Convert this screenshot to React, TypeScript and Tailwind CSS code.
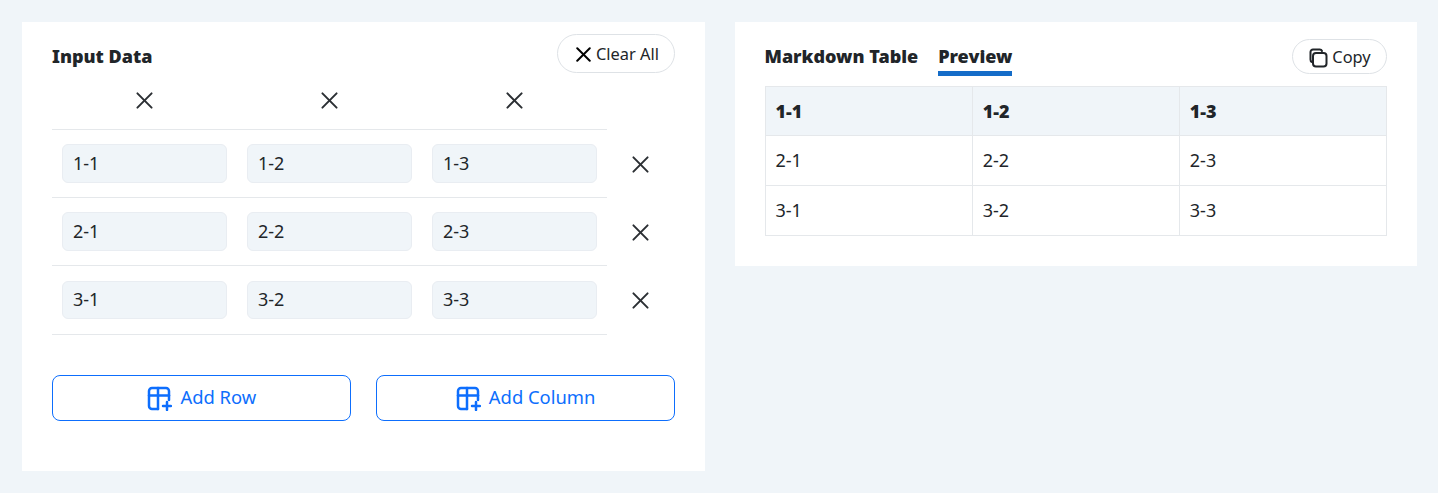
import React from "react";

const rows = [
    ["1-1", "1-2", "1-3"],
    ["2-1", "2-2", "2-3"],
    ["3-1", "3-2", "3-3"],
];

function XIcon({ size = 17, width = 2.100 }: { size?: number; width?: number }) {
    return (
        <svg width={size} height={size} viewBox="0 0 18 18" fill="none" stroke="currentColor" strokeWidth={width} strokeLinecap="round">
            <path d="M1.500 1.500l15 15" />
            <path d="M16.500 1.500l-15 15" />
        </svg>
    );
}

function TablePlusIcon() {
    return (
        <svg width="26" height="26" viewBox="0 0 26 26" fill="none" stroke="currentColor" strokeWidth="2.500" strokeLinecap="round" strokeLinejoin="round">
            <path d="M12 24H6a3 3 0 0 1-3-3V6a3 3 0 0 1 3-3h14a3 3 0 0 1 3 3v9" />
            <path d="M3 10.500h20" />
            <path d="M12 3v21" />
            <path d="M17 21h8" />
            <path d="M21 17v8" />
        </svg>
    );
}

function CopyIcon() {
    return (
        <svg width="20" height="20" viewBox="0 0 20 20" fill="none" stroke="currentColor" strokeWidth="2" strokeLinecap="round" strokeLinejoin="round">
            <rect x="5" y="5" width="13.500" height="13.500" rx="3" />
            <path d="M4 14a2.500 2.500 0 0 1-1.500-2.500V4a2.500 2.500 0 0 1 2.500-2.500h6.500A2.500 2.500 0 0 1 14 3" />
        </svg>
    );
}

function AddButton({ label }: { label: string }) {
    return (
        <button className="flex h-[46px] flex-1 items-center justify-center gap-2 rounded-lg border border-[#0d6efd] bg-white text-[18.400px] text-[#0d6efd]">
            <TablePlusIcon />
            <span className="pb-0.5">{label}</span>
        </button>
    );
}

export default function App() {
    return (
        <div className="flex min-h-[493px] items-start gap-[30px] bg-[#f0f5f9] py-[22px] pr-[21px] pl-[22px] font-['Noto_Sans',sans-serif] text-[#212529]">
            {/* Input */}
            <section className="flex-1 bg-white px-[30px] pt-3 pb-[50px]">
                <div className="flex items-start justify-between">
                    <h2 className="mt-[11px] text-lg leading-[22px] font-black">Input Data</h2>
                    <button className="flex h-[39px] w-[118px] items-center justify-center gap-[5px] rounded-full border border-[#dee2e6] bg-white pt-0.5 pl-1 text-[16.400px] text-[#212529]">
                        <span className="text-black"><XIcon size={15} width={2.400} /></span>
                        Clear All
                    </button>
                </div>

                <div className="flex h-[57px] w-[555px] border-b border-[#e5e8eb] pb-0.5">
                    {[0, 1, 2].map((i) => (
                        <div key={i} className="flex w-[185px] items-center justify-center text-[#2b2f33]">
                            <XIcon />
                        </div>
                    ))}
                </div>

                {rows.map((row, i) => (
                    <div key={i} className="flex">
                        <div className="flex h-[68.200px] w-[555px] items-center border-b border-[#e5e8eb]">
                            {row.map((cell) => (
                                <div key={cell} className="w-[185px] px-2.5">
                                    <div className="flex h-[38.700px] items-center rounded-md border border-[#e9edf2] bg-[#f0f5f9] px-2.5 pb-px text-lg">
                                        {cell}
                                    </div>
                                </div>
                            ))}
                        </div>
                        <div className="flex flex-1 items-center justify-center text-[#2b2f33]">
                            <XIcon />
                        </div>
                    </div>
                ))}

                <div className="mt-10 flex gap-[25px]">
                    <AddButton label="Add Row" />
                    <AddButton label="Add Column" />
                </div>
            </section>

            {/* Output */}
            <section className="flex-1 bg-white px-[30px] pt-[17px] pb-[30px]">
                <div className="flex h-[47px] items-start justify-between">
                    <div className="flex gap-5 text-lg leading-[22px] font-black">
                        <span className="mt-1.5">Markdown Table</span>
                        <span className="mt-1.5 h-[31px] border-b-[5px] border-[#146cc8]">Preview</span>
                    </div>
                    <button className="flex h-[35px] w-[95px] items-center justify-center gap-1 rounded-full border border-[#dee2e6] bg-white pt-0.5 text-[16.400px] text-[#212529]">
                        <CopyIcon />
                        Copy
                    </button>
                </div>

                <table className="w-full table-fixed border-collapse text-lg">
                    <thead>
                        <tr className="h-[49px] bg-[#f0f5f9]">
                            {rows[0].map((cell) => (
                                <th key={cell} className="border border-[#e5e8eb] px-2.5 text-left font-black">
                                    {cell}
                                </th>
                            ))}
                        </tr>
                    </thead>
                    <tbody>
                        {rows.slice(1).map((row, i) => (
                            <tr key={i} className="h-[50px]">
                                {row.map((cell) => (
                                    <td key={cell} className="border border-[#e5e8eb] px-2.5 pb-0.5">
                                        {cell}
                                    </td>
                                ))}
                            </tr>
                        ))}
                    </tbody>
                </table>
            </section>
        </div>
    );
}
